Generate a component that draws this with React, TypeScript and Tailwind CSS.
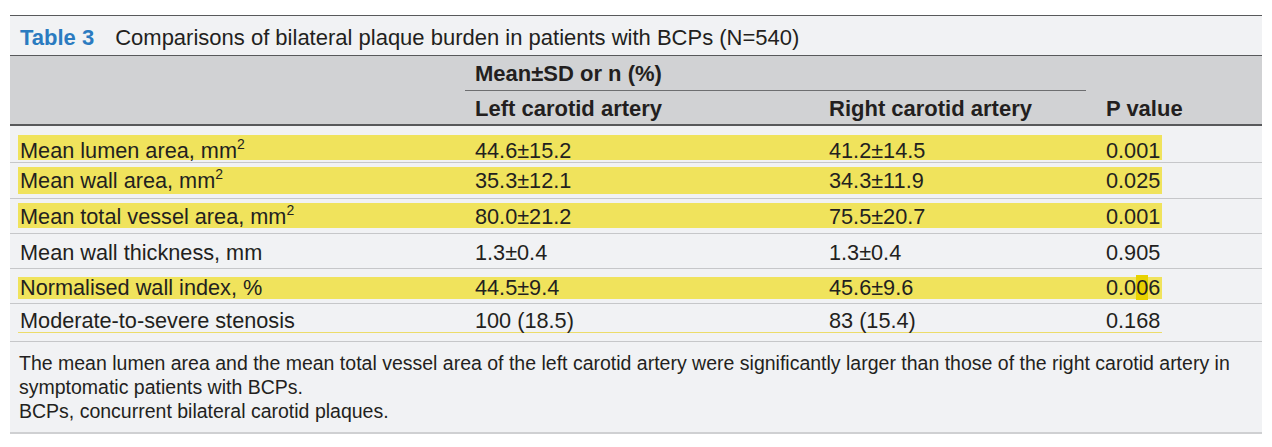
import React from "react";

type Row = {
  label: string;
  sup?: boolean;
  left: string;
  right: string;
  p: React.ReactNode;
  rowCls: string;
  bandCls: string;
  textCls: string;
};

const rows: Row[] = [
  {
    label: "Mean lumen area, mm",
    sup: true,
    left: "44.6±15.2",
    right: "41.2±14.5",
    p: "0.001",
    rowCls: "h-[37px] pt-[9px]",
    bandCls: "h-[25px] bg-[#f0e35c]",
    textCls: "pt-[5px]",
  },
  {
    label: "Mean wall area, mm",
    sup: true,
    left: "35.3±12.1",
    right: "34.3±11.9",
    p: "0.025",
    rowCls: "h-[36px] pt-[4px]",
    bandCls: "h-[27px] bg-[#f0e35c]",
    textCls: "pt-[0px]",
  },
  {
    label: "Mean total vessel area, mm",
    sup: true,
    left: "80.0±21.2",
    right: "75.5±20.7",
    p: "0.001",
    rowCls: "h-[35px] pt-[4px]",
    bandCls: "h-[25px] bg-[#f0e35c]",
    textCls: "pt-[2px]",
  },
  {
    label: "Mean wall thickness, mm",
    left: "1.3±0.4",
    right: "1.3±0.4",
    p: "0.905",
    rowCls: "h-[35px] pt-[0px]",
    bandCls: "h-[34px]",
    textCls: "pt-[4px]",
  },
  {
    label: "Normalised wall index, %",
    left: "44.5±9.4",
    right: "45.6±9.6",
    p: (
      <>
        0.0<span className="bg-[#e8d200]">0</span>6
      </>
    ),
    rowCls: "h-[35px] pt-[8px]",
    bandCls: "h-[22px] bg-[#f0e35c]",
    textCls: "pt-[0px]",
  },
  {
    label: "Moderate-to-severe stenosis",
    left: "100 (18.5)",
    right: "83 (15.4)",
    p: "0.168",
    rowCls: "h-[38px] pt-[1px]",
    bandCls: "h-[28px] border-b border-[#ecdc6a]",
    textCls: "pt-[4px]",
  },
];

export default function App() {
  return (
    <div className="min-h-[447px] bg-white pt-[15px] pl-[10px] font-['Liberation_Sans',Arial,sans-serif] text-[#231f20]">
      <div className="w-[1252px] border-t border-[#58595b]">
        {/* Title */}
        <div className="h-[40px] bg-[#f1f2f4] border-b border-[#58595b] flex items-center pl-[10px] pt-[5px] text-[22px] leading-none">
          <span className="font-bold text-[#2b7bc0]">Table 3</span>
          <span className="ml-[21px]">
            Comparisons of bilateral plaque burden in patients with BCPs (N=540)
          </span>
        </div>

        {/* Header */}
        <div className="bg-[#d1d2d4] border-b-2 border-[#58595b] text-[22px] font-bold leading-none">
          <div className="flex">
            <div className="w-[455px]" />
            <div className="w-[621px] h-[35px] border-b border-[#6d6e70] flex items-center pl-[10px] pt-[2px]">
              Mean±SD or n (%)
            </div>
          </div>
          <div className="h-[33px] grid grid-cols-[455px_354px_277px_166px] items-center pt-[2px]">
            <div />
            <div className="pl-[10px]">Left carotid artery</div>
            <div className="pl-[10px]">Right carotid artery</div>
            <div className="pl-[10px]">P value</div>
          </div>
        </div>

        {/* Body */}
        <div className="bg-[#f1f2f4] text-[21.7px] leading-none">
          {rows.map((r, i) => (
            <div
              key={i}
              className={`${r.rowCls} border-b border-[#c6c7c9]`}
            >
              <div
                className={`${r.bandCls} ml-[8px] w-[1144px] grid grid-cols-[457px_354px_277px_56px] items-center`}
              >
                <div className={`${r.textCls} pl-[2px] whitespace-nowrap`}>
                  {r.label}
                  {r.sup && (
                    <sup className="text-[14px] top-[-9px]">2</sup>
                  )}
                </div>
                <div className={r.textCls}>{r.left}</div>
                <div className={r.textCls}>{r.right}</div>
                <div className={r.textCls}>{r.p}</div>
              </div>
            </div>
          ))}
        </div>

        {/* Footer */}
        <div className="bg-[#f1f2f4] border-b-2 border-[#cfd0d2] pl-[9px] pt-[9px] pb-[9px] text-[19.5px] leading-[24px] whitespace-nowrap">
          The mean lumen area and the mean total vessel area of the left carotid artery were significantly larger than those of the right carotid artery in
          <br />
          symptomatic patients with BCPs.
          <br />
          BCPs, concurrent bilateral carotid plaques.
        </div>
      </div>
    </div>
  );
}
